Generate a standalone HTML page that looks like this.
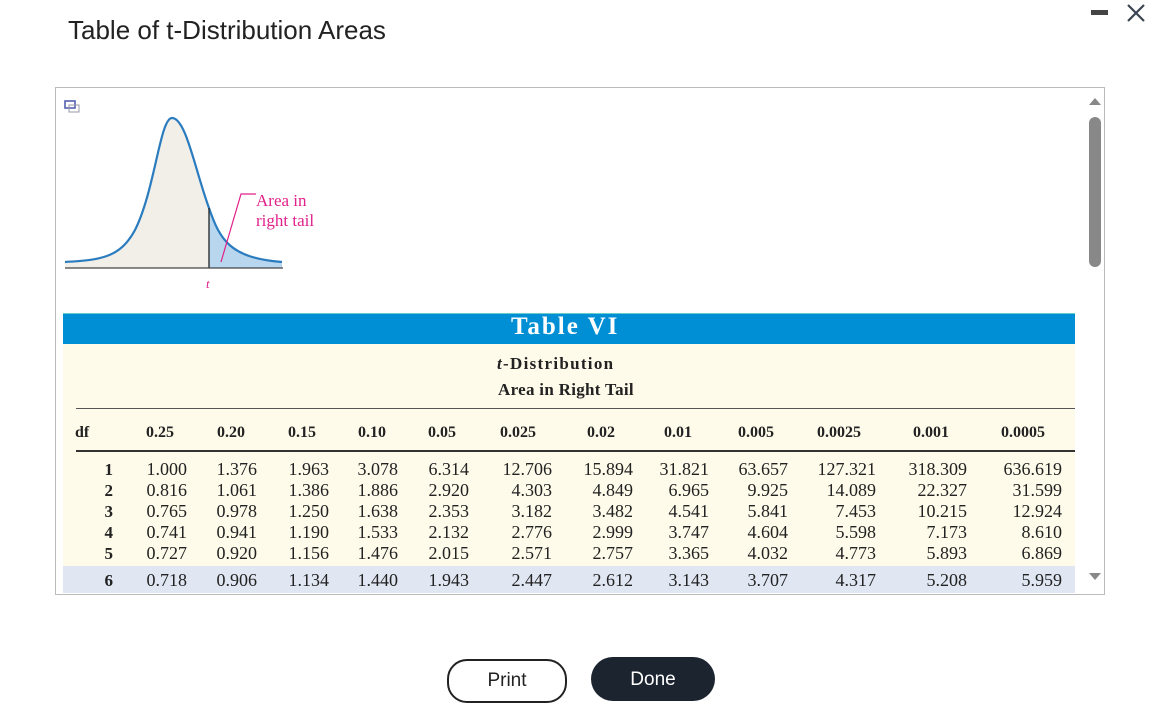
<!DOCTYPE html>
<html><head><meta charset="utf-8"><style>
body{margin:0;width:1155px;height:692px;overflow:hidden;background:#fff;font-family:"Liberation Sans",sans-serif;position:relative}
.a{position:absolute;white-space:nowrap}
.s{font-family:"Liberation Serif",serif;color:#222}
.v{font-size:18px;line-height:21px;text-align:right;width:70px}
.h{font-size:16px;font-weight:bold;line-height:20px}
</style></head><body>
<div class="a" style="left:68px;top:15px;font-size:26px;color:#222">Table of t-Distribution Areas</div>
<div class="a" style="left:1091px;top:10px;width:17px;height:5px;background:#444"></div>
<svg class="a" style="left:1125px;top:2px" width="22" height="22"><path d="M3 3L19 19M19 3L3 19" stroke="#3a4450" stroke-width="2.2"/></svg>
<div class="a" style="left:55px;top:87px;width:1048px;height:506px;border:1px solid #bbb"></div>
<svg class="a" style="left:64px;top:100px" width="16" height="14"><rect x="1" y="1" width="10" height="7" fill="none" stroke="#5560b0" stroke-width="1.6"/><rect x="5" y="5" width="10" height="7" fill="none" stroke="#99a" stroke-width="1"/></svg>
<svg class="a" style="left:1086px;top:95px" width="18" height="490"><path d="M3 10L9 3L15 10Z" fill="#888"/><rect x="3" y="22" width="12" height="150" rx="6" fill="#888"/><path d="M3 478L9 485L15 478Z" fill="#888"/></svg>
<svg class="a" style="left:60px;top:110px" width="280" height="185">
<path d="M5 152 C40 150 60 148 75 120 C95 80 100 8 112 8 C126 8 135 60 149 98 L149 158 L5 158Z" fill="#f1efe8"/>
<path d="M149 98 C160 130 170 148 222 152 L222 158 L149 158Z" fill="#b8d6ee"/>
<path d="M5 152 C40 150 60 148 75 120 C95 80 100 8 112 8 C126 8 135 60 149 98 C160 130 170 148 222 152" fill="none" stroke="#2a7cbf" stroke-width="2.2"/>
<line x1="149" y1="98" x2="149" y2="158" stroke="#222" stroke-width="1.3"/>
<line x1="5" y1="158" x2="223" y2="158" stroke="#444" stroke-width="1.3"/>
<path d="M161 152L181 84L196 84" fill="none" stroke="#e0218a" stroke-width="1.2"/>
<text x="196" y="96" font-family="Liberation Serif" font-size="17" fill="#e0218a">Area in</text>
<text x="196" y="116" font-family="Liberation Serif" font-size="17" fill="#e0218a">right tail</text>
<text x="146" y="178" font-family="Liberation Serif" font-style="italic" font-size="13" fill="#e0218a">t</text>
</svg>
<div class="a" style="left:63px;top:313px;width:1012px;height:30px;background:#008fd5;border-top:1px solid #6cc"></div>
<div class="a s" style="left:511px;top:312px;font-size:25px;font-weight:bold;color:#fff;line-height:30px;letter-spacing:2px">Table VI</div>
<div class="a" style="left:63px;top:344px;width:1012px;height:222px;background:#fefbea"></div>
<div class="a" style="left:63px;top:566px;width:1012px;height:27px;background:#e0e6f2"></div>
<div class="a s h" style="left:497px;top:354px;font-size:17px;letter-spacing:1.3px"><i>t</i>-Distribution</div>
<div class="a s h" style="left:498px;top:380px;font-size:17px;letter-spacing:0.3px">Area in Right Tail</div>
<div class="a" style="left:76px;top:408px;width:999px;height:1px;background:#555"></div>
<div class="a" style="left:76px;top:450px;width:999px;height:2px;background:#333"></div>
<div class="a s h" style="left:75px;top:423px">df</div>
<div class="a s h" style="left:146px;top:423px">0.25</div>
<div class="a s h" style="left:217px;top:423px">0.20</div>
<div class="a s h" style="left:288px;top:423px">0.15</div>
<div class="a s h" style="left:358px;top:423px">0.10</div>
<div class="a s h" style="left:428px;top:423px">0.05</div>
<div class="a s h" style="left:500px;top:423px">0.025</div>
<div class="a s h" style="left:587px;top:423px">0.02</div>
<div class="a s h" style="left:664px;top:423px">0.01</div>
<div class="a s h" style="left:738px;top:423px">0.005</div>
<div class="a s h" style="left:817px;top:423px">0.0025</div>
<div class="a s h" style="left:913px;top:423px">0.001</div>
<div class="a s h" style="left:1001px;top:423px">0.0005</div>
<div class="a s v" style="left:43px;top:459px;font-weight:bold;font-size:17px">1<br>2<br>3<br>4<br>5</div>
<div class="a s v" style="left:117px;top:459px">1.000<br>0.816<br>0.765<br>0.741<br>0.727</div>
<div class="a s v" style="left:187px;top:459px">1.376<br>1.061<br>0.978<br>0.941<br>0.920</div>
<div class="a s v" style="left:259px;top:459px">1.963<br>1.386<br>1.250<br>1.190<br>1.156</div>
<div class="a s v" style="left:328px;top:459px">3.078<br>1.886<br>1.638<br>1.533<br>1.476</div>
<div class="a s v" style="left:399px;top:459px">6.314<br>2.920<br>2.353<br>2.132<br>2.015</div>
<div class="a s v" style="left:482px;top:459px">12.706<br>4.303<br>3.182<br>2.776<br>2.571</div>
<div class="a s v" style="left:563px;top:459px">15.894<br>4.849<br>3.482<br>2.999<br>2.757</div>
<div class="a s v" style="left:639px;top:459px">31.821<br>6.965<br>4.541<br>3.747<br>3.365</div>
<div class="a s v" style="left:718px;top:459px">63.657<br>9.925<br>5.841<br>4.604<br>4.032</div>
<div class="a s v" style="left:806px;top:459px">127.321<br>14.089<br>7.453<br>5.598<br>4.773</div>
<div class="a s v" style="left:897px;top:459px">318.309<br>22.327<br>10.215<br>7.173<br>5.893</div>
<div class="a s v" style="left:992px;top:459px">636.619<br>31.599<br>12.924<br>8.610<br>6.869</div>
<div class="a s v" style="left:43px;top:570px;font-weight:bold;font-size:17px">6</div>
<div class="a s v" style="left:117px;top:570px">0.718</div>
<div class="a s v" style="left:187px;top:570px">0.906</div>
<div class="a s v" style="left:259px;top:570px">1.134</div>
<div class="a s v" style="left:328px;top:570px">1.440</div>
<div class="a s v" style="left:399px;top:570px">1.943</div>
<div class="a s v" style="left:482px;top:570px">2.447</div>
<div class="a s v" style="left:563px;top:570px">2.612</div>
<div class="a s v" style="left:639px;top:570px">3.143</div>
<div class="a s v" style="left:718px;top:570px">3.707</div>
<div class="a s v" style="left:806px;top:570px">4.317</div>
<div class="a s v" style="left:897px;top:570px">5.208</div>
<div class="a s v" style="left:992px;top:570px">5.959</div>
<div class="a" style="left:447px;top:659px;width:116px;height:40px;border:2px solid #222;border-radius:20px;text-align:center;line-height:40px;font-size:19px;color:#222">Print</div>
<div class="a" style="left:591px;top:657px;width:124px;height:44px;background:#1c2430;border-radius:22px;text-align:center;line-height:46px;font-size:19px;color:#fff">Done</div>
</body></html>
